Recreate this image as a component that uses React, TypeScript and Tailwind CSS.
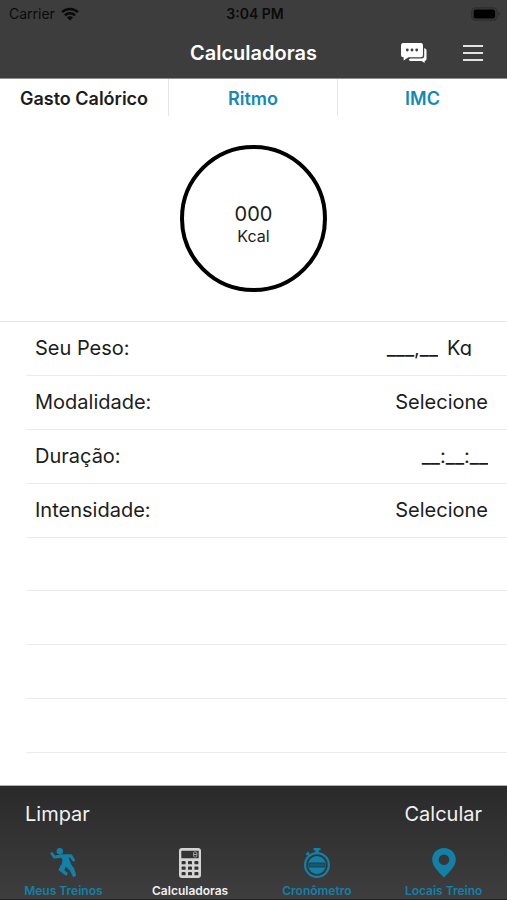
import { useState } from 'react'

const tabs = ['Gasto Calórico', 'Ritmo', 'IMC']

const nav = [
  { href: '#treinos', label: 'Meus Treinos', icon: RunnerIcon },
  { href: '#calculadoras', label: 'Calculadoras', icon: CalculatorIcon },
  { href: '#cronometro', label: 'Cronômetro', icon: StopwatchIcon },
  { href: '#locais', label: 'Locais Treino', icon: PinIcon },
]

function WifiIcon() {
  return (
    <svg width="18" height="14" viewBox="0 0 18 14" fill="none" stroke="#0a0a0a" strokeWidth="2.4">
      <path d="M1 5.2a11.6 11.6 0 0 1 16 0" />
      <path d="M3.9 8.3a7.4 7.4 0 0 1 10.2 0" />
      <path d="M9 13.6 5.9 10.5a4.4 4.4 0 0 1 6.2 0z" fill="#0a0a0a" stroke="none" />
    </svg>
  )
}

function BatteryIcon() {
  return (
    <svg width="30" height="14" viewBox="0 0 30 14">
      <rect x="0.8" y="0.8" width="25.4" height="12.4" rx="4" fill="none" stroke="#2c2c2c" strokeWidth="1.2" />
      <rect x="2.6" y="2.6" width="21.6" height="8.8" rx="2.2" fill="#000" />
      <path d="M27.6 5v4c.9-.4 1.4-1.1 1.4-2s-.5-1.6-1.4-2z" fill="#2c2c2c" />
    </svg>
  )
}

function ChatIcon() {
  return (
    <svg width="26" height="20" viewBox="0 0 26 20" fill="#fff">
      <path d="M2.5 0h17A2.3 2.3 0 0 1 22 2.3v9.7a2.3 2.3 0 0 1-2.5 2.3H7.5L2.6 17.6v-3.3A2.3 2.3 0 0 1 0 12V2.3A2.3 2.3 0 0 1 2.5 0z" />
      <path d="M23.2 5.2c1.4.1 2.3 1 2.3 2.3v8.3c0 1.3-.8 2.1-1.9 2.2V20l-3-2H10c-1 0-1.800-.5-2.200-1.500l1.400-1.100h11.500c1.600 0 2.500-.9 2.500-2.500z" />
      <circle cx="6.3" cy="7" r="1.4" fill="#3d3d3d" />
      <circle cx="11" cy="7" r="1.4" fill="#3d3d3d" />
      <circle cx="15.7" cy="7" r="1.4" fill="#3d3d3d" />
    </svg>
  )
}

function MenuIcon() {
  return (
    <svg width="20" height="16" viewBox="0 0 20 16" stroke="#e2e2e2" strokeWidth="2">
      <path d="M0 1h20M0 8h20M0 15h20" />
    </svg>
  )
}

function RunnerIcon() {
  return (
    <svg width="26" height="30" viewBox="0 0 26 30" fill="currentColor">
      <circle cx="9.8" cy="3.2" r="3.2" />
      <path d="M2 3.800 5 7.400 12 6.300h8.600c.9 0 1.500.4 1.900 1.100l2.800 5-2.300 1.400-3-4.300h-1.400l2.300 6.200c.2.700.5 1.300 1 1.900l1.700 2.200c.4.500.6 1 .8 1.600l2 6.200-3.200 1.700-3.200-6.600-4.200-4-1.500 3.600 3.500 2.600-1.300 3.200-7.300-5.300c-.7-.5-.8-1.200-.4-1.900l3.100-5.300.6-4.200-1.500-1.700-5.900.8c-.9.1-1.500-.1-2-.8L0 5.200z" />
    </svg>
  )
}

function CalculatorIcon() {
  return (
    <svg width="24" height="30" viewBox="0 0 24 30">
      <rect x="1" y="0" width="22" height="30" rx="3" fill="#d4d4d4" />
      <rect x="3.3" y="2.7" width="17.4" height="7.5" rx="0.5" fill="#333" />
      <rect x="15.6" y="4" width="3.2" height="5" rx="1" fill="none" stroke="#a3a3a3" strokeWidth="1" />
      <path d="M15.6 6.5h3.2" stroke="#a3a3a3" />
      {[13, 18.5, 24].map((y) =>
        [3.6, 10, 16.4].map((x) => <rect key={`${x}-${y}`} x={x} y={y} width="4" height="3.3" rx="0.9" fill="#333" />)
      )}
    </svg>
  )
}

function StopwatchIcon() {
  return (
    <svg width="28" height="30" viewBox="0 0 28 30" fill="none" stroke="currentColor">
      <path d="M10.5 0h7v2.3h-1.700v3h-3.600v-3h-1.700z" fill="currentColor" stroke="none" />
      <path d="m3.2 6.7 2.600-2.500M4.400 5.300l2.400 2.600" strokeWidth="2" />
      <circle cx="14" cy="17" r="11.9" strokeWidth="2.2" />
      <circle cx="14" cy="17" r="9" fill="currentColor" stroke="none" />
      <path d="M5.5 14.4h17v5.200h-17z" fill="#1c4a5c" stroke="none" />
      <path d="M7 17h14" stroke="#17586f" strokeWidth="2.4" />
    </svg>
  )
}

function PinIcon() {
  return (
    <svg width="24" height="30" viewBox="0 0 24 30" fill="currentColor">
      <path fillRule="evenodd" d="M12 0c6.600 0 11.800 5 11.800 11.600C23.800 18 18 23.500 12 29.500 6 23.500.2 18 .2 11.600.2 5 5.400 0 12 0zm0 6.500a5.300 5.300 0 1 0 0 10.600 5.300 5.300 0 0 0 0-10.600z" />
    </svg>
  )
}

export default function App() {
  const [tab, setTab] = useState(0)
  const [peso, setPeso] = useState('___,__')
  const [duracao, setDuracao] = useState('__:__:__')

  const row = 'flex grow basis-12 items-center justify-between border-b border-[#ececec] pl-[9px] pr-[19px]'
  const select = 'appearance-none bg-transparent text-right [text-align-last:right] outline-none'

  return (
    <div className="flex min-h-screen flex-col bg-white font-[Inter,'Liberation_Sans',sans-serif] text-[#1c1c1c]">
      <header className="border-b border-[#8c8c8c] bg-[#3d3d3d]">
        <div className="grid h-[27px] grid-cols-3 items-center pl-[9px] pr-[6px] text-[14px] text-[#0a0a0a]">
          <div className="flex items-center gap-[6px]">
            Carrier
            <WifiIcon />
          </div>
          <div className="text-center font-semibold">3:04 PM</div>
          <div className="flex justify-end">
            <BatteryIcon />
          </div>
        </div>
        <div className="grid h-[51px] grid-cols-[1fr_auto_1fr] items-center pr-6">
          <h1 className="col-start-2 pl-6 text-[20px] font-semibold text-white">Calculadoras</h1>
          <div className="flex items-center justify-end gap-9">
            <button type="button" aria-label="Mensagens">
              <ChatIcon />
            </button>
            <button type="button" aria-label="Menu">
              <MenuIcon />
            </button>
          </div>
        </div>
      </header>

      <div className="grid grid-cols-3 divide-x divide-[#e6e6e6]">
        {tabs.map((label, i) => (
          <button
            key={label}
            type="button"
            onClick={() => setTab(i)}
            className={`h-[37px] pt-[2px] text-[18px] font-semibold ${tab === i ? 'text-[#1c1c1c]' : 'text-[#1389b8]'}`}
          >
            {label}
          </button>
        ))}
      </div>

      <main className="flex flex-1 flex-col">
        <div className="flex justify-center border-b border-[#e8e8e8] pt-[29px] pb-[29px]">
          <div className="flex size-[147px] flex-col items-center justify-center rounded-full border-4 border-black pt-[10px]">
            <span className="text-[20px] leading-6">000</span>
            <span className="text-[16px] leading-5">Kcal</span>
          </div>
        </div>

        <form className="flex flex-1 flex-col pl-[26px] text-[20px]">
          <div className={row}>
            <label htmlFor="peso">Seu Peso:</label>
            <div className="flex items-center gap-[9px] pr-4">
              <input
                id="peso"
                value={peso}
                onChange={(e) => setPeso(e.target.value)}
                className="w-20 bg-transparent text-right outline-none"
              />
              <span className="h-4 overflow-hidden leading-4">Kg</span>
            </div>
          </div>
          <div className={row}>
            <label htmlFor="modalidade">Modalidade:</label>
            <select id="modalidade" className={select}>
              <option>Selecione</option>
            </select>
          </div>
          <div className={row}>
            <label htmlFor="duracao">Duração:</label>
            <input
              id="duracao"
              value={duracao}
              onChange={(e) => setDuracao(e.target.value)}
              className="w-28 bg-transparent text-right outline-none"
            />
          </div>
          <div className={row}>
            <label htmlFor="intensidade">Intensidade:</label>
            <select id="intensidade" className={select}>
              <option>Selecione</option>
            </select>
          </div>
          <div className={row} />
          <div className={row} />
          <div className={row} />
          <div className={row} />
          <div className="h-8" />
        </form>
      </main>

      <footer className="border-t border-[#b0b0b0] bg-linear-to-b from-[#2a2a2a] to-[#3e3e3e]">
        <div className="flex h-[54px] items-center justify-between px-[25px] pt-[2px] text-[20px] text-[#f2f2f2]">
          <button type="button">Limpar</button>
          <button type="button">Calcular</button>
        </div>
        <nav className="grid h-[60px] grid-cols-4 border-b border-[#222]">
          {nav.map(({ href, label, icon: Icon }) => (
            <a
              key={href}
              href={href}
              className={`flex flex-col items-center gap-[5px] pt-2 text-[12px] leading-4 font-semibold ${
                label === 'Calculadoras' ? 'text-[#f0f0f0]' : 'text-[#1380a8]'
              }`}
            >
              <Icon />
              {label}
            </a>
          ))}
        </nav>
      </footer>
    </div>
  )
}
